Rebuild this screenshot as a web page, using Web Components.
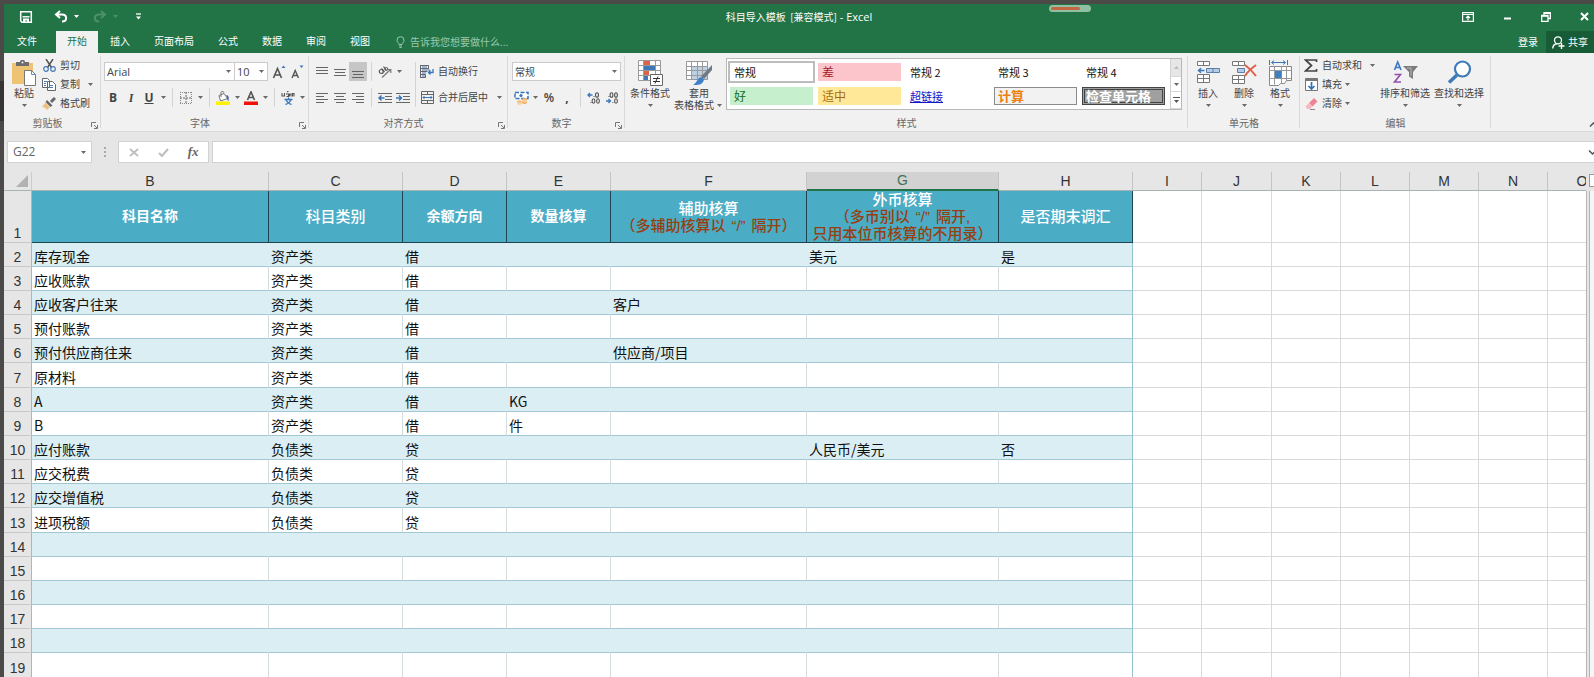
<!DOCTYPE html>
<html lang="zh-CN">
<head>
<meta charset="utf-8">
<title>科目导入模板 [兼容模式] - Excel</title>
<style>
  html, body { height: 100%; margin: 0; }
  body { overflow: hidden; background: #4c4a48; font-family: "Noto Sans CJK SC", "Noto Sans", sans-serif; font-size: 10px; color: #444; }
</style>
</head>
<body>
<xl-app></xl-app>

<script>
const RESET = `
  *, *::before, *::after { box-sizing: border-box; }
  button, input, select { font: inherit; color: inherit; margin: 0; padding: 0; border: 0; background: none; border-radius: 0; outline: 0; }
  button { cursor: default; }
  :host([hidden]) { display: none; }
`;

class XlElement extends HTMLElement {
  constructor() { super(); this.attachShadow({ mode: 'open' }); }
  connectedCallback() {
    if (this.shadowRoot.childNodes.length) return;
    const t = document.createElement('template');
    t.innerHTML = `<style>${RESET}${this.css()}</style>${this.html()}`;
    this.shadowRoot.append(t.content.cloneNode(true));
  }
  css() { return ''; }
  html() { return ''; }
}

/* ---------- icons: [width, height, markup] ---------- */
const line = (y, x1, x2) => `<path d="M${x1} ${y}.5H${x2}" stroke="#666"/>`;
const ICONS = {
  save: [14, 14, `<path d="M1.7 1.7h10.6v10.6H3L1.7 11z" fill="none" stroke="#fff" stroke-width="1.5"/><path d="M3.5 6.8h7" stroke="#fff" stroke-width="1.4"/><path d="M4 8.5h6V13H8v-2.500H6.300V13H4z" fill="#fff"/>`],
  undo: [14, 13, `<path d="M6 1L2 4.500 6 8M2.500 4.500H8c5.500 0 5.500 7 0 7" fill="none" stroke="#fff" stroke-width="2"/>`],
  redo: [14, 13, `<path d="M8 1l4 3.500L8 8M11.500 4.500H6c-5.500 0-5.500 7 0 7" fill="none" stroke="#4d9069" stroke-width="2"/>`],
  customize: [7, 7, `<path d="M1 1h5" stroke="#fff" stroke-width="1.300"/><path d="M1 3.500h5L3.500 6.500z" fill="#fff"/>`],
  caret: [5, 3, `<path d="M0 0h5L2.500 3z" fill="#6a6a6a"/>`],
  caretWhite: [5, 3, `<path d="M0 0h5L2.500 3z" fill="#fff"/>`],
  caretDim: [5, 3, `<path d="M0 0h5L2.500 3z" fill="#4d9069"/>`],
  display: [12, 10, `<path d="M.6.600h10.800v8.800H.6zM.6 2.500h10.800" fill="none" stroke="#fff" stroke-width="1.200"/><path d="M6 8.500v-4M4 6l2-2 2 2" fill="none" stroke="#fff" stroke-width="1.200"/>`],
  minimize: [9, 9, `<path d="M1 6.500h7" stroke="#fff" stroke-width="2"/>`],
  restore: [10, 10, `<path d="M3 3V.7h6.300v5.800H7.500M.7 3.500h6.300v5.800H.7z" fill="none" stroke="#fff" stroke-width="1.300"/><path d="M.7 4h6.300M3 1.200h6.300" stroke="#fff" stroke-width="1.500"/>`],
  close: [9, 9, `<path d="M1 1l7 7M8 1L1 8" stroke="#fff" stroke-width="2"/>`],
  bulb: [9, 12, `<path d="M3 8.500C3 7 1 6.500 1 4.200a3.500 3.500 0 0 1 7 0C8 6.500 6 7 6 8.500zM3 10h3M3.500 11.500h2" fill="none" stroke="#9bc8ad"/>`],
  share: [13, 13, `<circle cx="6" cy="4.300" r="3.500" fill="none" stroke="#fff" stroke-width="1.300"/><path d="M.7 12.500c.2-3 2-4.600 4.300-4.800M9.500 7v6M6.500 10h6" fill="none" stroke="#fff" stroke-width="1.400"/>`],
  paste: [24, 26, `<path d="M0 3h21v21H0z" fill="#eec374"/><path d="M4 2h4c0-3 5-3 5 0h4v4H4z" fill="#6d6d6d"/><circle cx="10.500" cy="2.500" r="1" fill="#eee"/><path d="M12.500 10.500h7l4 4v11h-11z" fill="#fff" stroke="#777"/><path d="M19.500 10.500v4h4" fill="none" stroke="#5a8cc5"/>`],
  cut: [13, 13, `<path d="M3 0l5.500 8.500M10 0L4.500 8.500" stroke="#555" stroke-width="1.500"/><circle cx="3" cy="10" r="2.300" fill="none" stroke="#4a7db8" stroke-width="1.200"/><circle cx="10" cy="10" r="2.300" fill="none" stroke="#4a7db8" stroke-width="1.200"/>`],
  copy: [14, 13, `<path d="M.5.500h5l2 2v7h-7zM5.500 3.500h5l3 3v6h-8z" fill="#fff" stroke="#666"/><path d="M2 3.500h3M2 5.500h2M2 7.500h2M7 7.500h4M7 9.500h4" stroke="#4a7db8"/>`],
  brush: [14, 13, `<path d="M13 1L9 5" stroke="#666" stroke-width="3"/><path d="M5 3l5.500 5.500-2 1.500L3.500 5z" fill="#666"/><path d="M3.500 5.500L8 10l-3 3C4 11 2 10 0 10z" fill="#eec083"/>`],
  fontUp: [14, 14, `<path d="M1.500 13L5.500 3.500 9.500 13M3 10h5" fill="none" stroke="#555" stroke-width="1.600"/><path d="M9.500 3L11.500 .5l2 2.500z" fill="#3b76b8"/>`],
  fontDown: [14, 14, `<path d="M2 13l3.200-7.500L8.500 13M3.200 10.500h4" fill="none" stroke="#555" stroke-width="1.400"/><path d="M9.500.500h4L11.500 3z" fill="#3b76b8"/>`],
  borders: [12, 12, `<path d="M.5 0v12M11.500 0v12M0 .5h12M0 11.500h12" stroke="#888" stroke-dasharray="1 1"/><path d="M6 0v12M0 6h12" stroke="#666" stroke-dasharray="2 1"/>`],
  fill: [14, 14, `<path d="M3 4.500l5-2 3.500 5-7 2.500z" fill="#fff" stroke="#777"/><path d="M5 6V1.500C5 0 8 0 8 2" fill="none" stroke="#777"/><path d="M10 4c3 0 3 3 2.500 6-2-1-1-4-2.500-6z" fill="#3d5fa8"/><path d="M0 10.500h14V14H0z" fill="#fff200"/>`],
  fontColor: [14, 14, `<path d="M3.500 9L7 .8 10.500 9M4.800 6.500h4.500" fill="none" stroke="#555" stroke-width="1.600"/><path d="M0 10.500h14V14H0z" fill="#f0100c"/>`],
  phonetic: [14, 14, `<path d="M1 2v3h2.500V2M5 3h2.500v2.500H5.500M8.500 5.500V3H10v2.500M11.500 5.500V2.500H13v3M6 1l1.500-1" fill="none" stroke="#555" stroke-width="1.100"/><path d="M3.500 8.500h8M7.500 6.500v2M5 9c1 2 3 4 5.500 4.500M10 9c-1 2-3 4-5.500 4.500" fill="none" stroke="#3b76b8" stroke-width="1.300"/>`],
  alTop: [12, 12, line(1,0,12)+line(4,0,12)+line(7,0,12)],
  alMid: [12, 12, line(3,0,12)+line(6,1,11)+line(9,0,12)],
  alBot: [12, 12, line(5,0,12)+line(8,1,11)+line(11,0,12)],
  alLeft: [12, 10, line(0,0,12)+line(3,0,8)+line(6,0,12)+line(9,0,8)],
  alCenter: [12, 10, line(0,0,12)+line(3,2,10)+line(6,0,12)+line(9,2,10)],
  alRight: [12, 10, line(0,0,12)+line(3,4,12)+line(6,0,12)+line(9,4,12)],
  orient: [14, 14, `<circle cx="3.300" cy="6.500" r="2" fill="none" stroke="#555" stroke-width="1.200"/><path d="M3.500 3.500L6.500 7M5.500 1.500l3 4" stroke="#555" stroke-width="1.200"/><circle cx="8.300" cy="4" r="1.500" fill="none" stroke="#555"/><path d="M4 12.500L12 5M12.800 8V4.500H9.500" fill="none" stroke="#777" stroke-width="1.200"/>`],
  outdent: [14, 12, line(1,0,14)+line(4,7,14)+line(7,7,14)+line(10,0,14)+`<path d="M6.500 6H1M3.500 3.500L1 6l2.500 2.500" fill="none" stroke="#3b76b8" stroke-width="1.500"/>`],
  indent: [14, 12, line(1,0,14)+line(4,7,14)+line(7,7,14)+line(10,0,14)+`<path d="M0 6h5.500M3 3.500L5.500 6 3 8.500" fill="none" stroke="#3b76b8" stroke-width="1.500"/>`],
  wrap: [14, 13, `<path d="M.5 0v13M.5.500h8v3h-8M8.500.500v3M.5 6.500h7M.5 9.500h5v3h-5" fill="none" stroke="#666"/><path d="M2 2h5M2 5h8M2 8h4M2 11h3" stroke="#4a7db8"/><path d="M13 4v3.500H9M10.500 5.500l-2 2 2 2" fill="none" stroke="#3b76b8" stroke-width="1.300"/>`],
  merge: [13, 13, `<path d="M.5.500h12v12H.5zM.5 3.500h12M.5 9.500h12M6.500.500v3M6.500 9.500v3" fill="none" stroke="#666"/><path d="M2 6.500h9M3.500 5L2 6.500 3.500 8M9.500 5L11 6.500 9.500 8" fill="none" stroke="#3b76b8"/>`],
  money: [15, 14, `<path d="M1 1.500h13v6H1z" fill="#fff" stroke="#3b76b8" stroke-width="1.500" stroke-dasharray="4 1.500"/><circle cx="7" cy="4.500" r="1.600" fill="#3b76b8"/><path d="M8 8.500c0-2 5-2 5 0v3c0 2-5 2-5 0zM3 11c0-2 5-2 5 0v1c0 2-5 2-5 0z" fill="#f4b56e"/><path d="M8 10h5M3 12h5" stroke="#fff" stroke-width=".7"/>`],
  decInc: [14, 12, `<path d="M5.500 3H1M3 1L1 3l2 2" fill="none" stroke="#3b76b8" stroke-width="1.300"/><g fill="none" stroke="#555" stroke-width="1.100"><ellipse cx="10" cy="3" rx="1.500" ry="2.300"/><ellipse cx="6.500" cy="9" rx="1.400" ry="2.200"/><ellipse cx="11" cy="9" rx="1.400" ry="2.200"/></g><path d="M3.500 10.500h1M6.500 4.500h1" stroke="#555"/>`],
  decDec: [14, 12, `<path d="M1 9h4.500M3.500 7l2 2-2 2" fill="none" stroke="#3b76b8" stroke-width="1.300"/><g fill="none" stroke="#555" stroke-width="1.100"><ellipse cx="6.500" cy="3" rx="1.400" ry="2.300"/><ellipse cx="11" cy="3" rx="1.400" ry="2.300"/><ellipse cx="11" cy="9" rx="1.400" ry="2.200"/></g><path d="M3.500 4.500h1M7.500 10.500h1" stroke="#555"/>`],
  launcher: [7, 7, `<path d="M.5 5V.5H5M3 3l3 3M6.500 3v3.500H3" fill="none" stroke="#777"/>`],
  cond: [26, 26, `<path d="M1.500.500h22v20h-22z" fill="#fff"/><path d="M7 1h6v5H7zM7 11h5v5H7z" fill="#d9644a"/><path d="M7 6h11v5H7zM7 16h4v5H7z" fill="#3f78b5"/><path d="M1.500.500h22v20h-22zM1.500 5.500h22M1.500 10.500h22M1.500 15.500h22M6.500.500v20M18.500.500v20" fill="none" stroke="#999"/><path d="M13.500 14.500h12v11h-12z" fill="#fff" stroke="#666"/><path d="M16 18.500h7M16 21.500h7M21 16.500l-3 7" stroke="#333"/>`],
  fmtTable: [26, 26, `<path d="M.5 1.500h21v18H.5z" fill="#fff"/><path d="M6 6h16v14H6z" fill="#bcd0e6"/><path d="M.5 1.500h21v18H.5zM.5 6.500h21M.5 10.500h21M.5 15.500h21M5.500 1.500v18M11.500 1.500v18M16.500 1.500v18" fill="none" stroke="#999"/><path d="M26 5v5l-8 9-3-2.500z" fill="#707a84"/><path d="M15 17l3 2.500c-1 5-6 6-11 5.500 4-2 4-7 8-8z" fill="#3f80c8"/>`],
  insert: [23, 24, `<path d="M.5 1.500h12v4H.5zM6.500 1.500v4M.5 14.500h12v8H.5zM6.500 14.500v8M.5 18.500h12" fill="#fff" stroke="#777"/><path d="M9.500 8.500h13v4h-13zM16 8.500v4" fill="#b4cce6" stroke="#5a7fa8"/><path d="M7.500 10.500H2M4 8.200L1.500 10.500 4 12.800" fill="none" stroke="#3b76b8" stroke-width="1.500"/>`],
  remove: [25, 24, `<path d="M.5 1.500h12v4H.5zM6.500 1.500v4M.5 15.500h12v8H.5zM6.500 15.500v8M.5 19.500h12" fill="#fff" stroke="#777"/><path d="M5.500 8.500h7v4h-7z" fill="#b4cce6" stroke="#5a7fa8"/><path d="M13 5c4 3 8 7 11 11M24 5c-4 3-9 7-11 11" fill="none" stroke="#de6048" stroke-width="2"/>`],
  format: [25, 26, `<path d="M1.500 0v5M19.500 0v5" stroke="#3b76b8"/><path d="M4 2.500h13M6 .5l-2.500 2L6 4.500M15 .5l2.500 2-2.500 2" fill="none" stroke="#3b76b8"/><path d="M1.500 6.500h22v14h-5l-2 3h-4l-2 2h-9z" fill="#fff" stroke="#888"/><path d="M1.500 10.500h22M1.500 18.500h22M6.500 6.500v18M13.500 6.500v17M18.500 6.500v14" stroke="#999"/><path d="M7 11h6.500v7H7z" fill="#3f80c0"/>`],
  sigma: [14, 13, `<path d="M12.500 3V1H1.500l6 5.500-6 5.500h11v-2" fill="none" stroke="#444" stroke-width="1.700"/>`],
  down: [13, 13, `<path d="M.5.500h12v12H.5z" fill="#fff" stroke="#777"/><path d="M1 2h11" stroke="#777" stroke-width="2"/><path d="M6.500 4v6.500M3.500 8l3 3 3-3" fill="none" stroke="#2f72b8" stroke-width="1.700"/>`],
  eraser: [13, 12, `<path d="M4 5L9 0l3.500 3.500-5 5z" fill="#ef8394"/><path d="M4 5l3.500 3.500L5 11H2L.5 8.500z" fill="#f6b8c2"/><path d="M5 11.500h5" stroke="#888"/>`],
  sort: [25, 25, `<path d="M1.500 10L4.700 2 8 10M2.700 7.500h4" fill="none" stroke="#3f78c0" stroke-width="1.600"/><path d="M1.500 14.500h6L1.500 22h6.500" fill="none" stroke="#9150ad" stroke-width="1.600"/><path d="M10 6h15l-5 6v7l-4-2.500V12z" fill="#7b7b7b"/><path d="M14 8h4v8" fill="none" stroke="#bbb"/>`],
  find: [25, 25, `<circle cx="15.500" cy="9" r="7.500" fill="#fff" stroke="#3d7ab8" stroke-width="2.200"/><path d="M10 15l-8 7.500" stroke="#3d7ab8" stroke-width="3.500"/>`],
  up: [9, 5, `<path d="M1 4.500l3.500-3.500L8 4.500" fill="none" stroke="#555" stroke-width="1.500"/>`],
  chevron: [9, 5, `<path d="M1 .5L4.500 4 8 .5" fill="none" stroke="#555" stroke-width="1.500"/>`],
  upSmall: [5, 3, `<path d="M0 3h5L2.500 0z" fill="#bbb"/>`],
  more: [7, 7, `<path d="M0 .5h7" stroke="#555"/><path d="M1 3h5L3.500 6z" fill="#555"/>`],
  cancel: [10, 9, `<path d="M1 1l8 7M9 1L1 8" stroke="#bdbdbd" stroke-width="1.700"/>`],
  check: [11, 9, `<path d="M1 5l3 3 6-7" fill="none" stroke="#bdbdbd" stroke-width="2"/>`]
};
class XlIcon extends XlElement {
  css() { return `:host { display: block; flex: none; } svg { display: block; }`; }
  html() {
    const [w, h, m] = ICONS[this.getAttribute('name')];
    return `<svg width="${w}" height="${h}" viewBox="0 0 ${w} ${h}" aria-hidden="true">${m}</svg>`;
  }
}

/* ---------- a ribbon command: icon or glyph, label, optional caret ---------- */
class ToolButton extends XlElement {
  css() { return `
    :host { display: block; }
    button { display: flex; align-items: center; width: 100%; height: 19px; line-height: 14px; white-space: nowrap; }
    .pic { width: 18px; display: flex; justify-content: center; }
    .txt { margin-left: 2px; padding-bottom: 2px; }
    .caret { width: 10px; display: flex; justify-content: center; }
    :host([wide]) .caret { margin-left: 5px; }
    :host([push]) .caret { margin-left: auto; }
    :host([pressed]) button { background: #c6c6c6; }
    :host([big]) button { height: auto; flex-direction: column; padding-top: 7px; line-height: 12px; }
    :host([big]) .pic { width: auto; height: 24px; margin-bottom: 3px; }
    :host([big]) .txt { margin: 0; padding: 0; }
    :host([big]) .caret { height: 12px; align-items: center; }
    .second { display: flex; }`; }
  html() {
    const a = n => this.getAttribute(n);
    const pic = a('icon') ? `<xl-icon name="${a('icon')}"></xl-icon>` : `<slot name="glyph"></slot>`;
    const txt = a('label') ? `<span class="txt">${a('label')}</span>` : '';
    const caret = this.hasAttribute('caret') ? `<span class="caret"><xl-icon name="caret"></xl-icon></span>` : '';
    const second = a('second') ? `<span class="second"><span>${a('second')}</span>${caret}</span>` : caret;
    return `<button type="button" aria-label="${a('label') || a('tip') || ''}"><span class="pic">${pic}</span>${txt}${second}</button>`;
  }
}

class RibbonGroup extends XlElement {
  css() { return `
    :host { display: flex; flex-direction: column; flex: none; height: 78px; position: relative; }
    :host::after { content: ""; width: 1px; background: #d8d8d8; position: absolute; right: 0; top: 3px; bottom: 3px; }
    .body { height: 63px; }
    footer { display: flex; height: 15px; line-height: 13px; color: #666; }
    .name { flex: 1; text-align: center; }
    button { width: 10px; padding-top: 4px; }`; }
  html() {
    const n = this.getAttribute('name');
    return `<div class="body"><slot></slot></div><footer><span class="name">${n}</span>${
      this.hasAttribute('launcher') ? `<button type="button" aria-label="${n}设置"><xl-icon name="launcher"></xl-icon></button>` : ''}</footer>`;
  }
}

class DropField extends XlElement {
  css() { return `
    :host { display: block; position: relative; height: 19px; color: #444; font-family: "Open Sans", "Noto Sans CJK SC", sans-serif; font-size: 11px; }
    :host([cjk]) { font-size: 10px; }
    select { appearance: none; width: 100%; height: 100%; padding: 0 2px; background: #fff; border: 1px solid #cbcbcb; line-height: 14px; }
    xl-icon { position: absolute; right: 4px; top: 8px; pointer-events: none; }`; }
  html() { return `<select aria-label="${this.getAttribute('tip')}"><option>${this.getAttribute('value')}</option></select><xl-icon name="caret"></xl-icon>`; }
}

/* ---------- title bar ---------- */
class TitleBar extends XlElement {
  css() { return `
    :host { display: grid; grid-template-columns: 1fr auto 1fr; align-items: center; height: 27px; padding-bottom: 2px; background: #227447; color: #fff; line-height: 14px; position: relative; }
    .qat { display: flex; align-items: center; padding-left: 15px; }
    .qat button { display: flex; align-items: center; gap: 6px; margin-right: 14px; }
    .qat button:first-child { margin-right: 21px; }
    .qat button:nth-child(3) { margin-right: 17px; }
    .win { display: flex; justify-content: flex-end; align-items: center; gap: 29px; padding-right: 5px; }
    h1 { margin: 0; font-size: 10px; font-weight: 400; white-space: pre; }
    h1 span { font-family: "Open Sans", sans-serif; font-size: 11px; }
    .pill { position: absolute; left: 66%; top: 1px; width: 42px; height: 7px; margin-left: -4px; border-radius: 4px; background: #8fc0a3; padding: 2px 11px 2px 2px; }
    .pill i { display: block; height: 3px; border-radius: 2px; background: #c4663f; }`; }
  html() { return `
    <div class="qat">
      <button type="button" aria-label="保存"><xl-icon name="save"></xl-icon></button>
      <button type="button" aria-label="撤消"><xl-icon name="undo"></xl-icon><xl-icon name="caretWhite"></xl-icon></button>
      <button type="button" aria-label="恢复"><xl-icon name="redo"></xl-icon><xl-icon name="caretDim"></xl-icon></button>
      <button type="button" aria-label="自定义快速访问工具栏"><xl-icon name="customize"></xl-icon></button>
    </div>
    <h1>科目导入模板  [兼容模式]<span> - Excel</span></h1>
    <div class="win">
      <button type="button" aria-label="功能区显示选项"><xl-icon name="display"></xl-icon></button>
      <button type="button" aria-label="最小化"><xl-icon name="minimize"></xl-icon></button>
      <button type="button" aria-label="向下还原"><xl-icon name="restore"></xl-icon></button>
      <button type="button" aria-label="关闭"><xl-icon name="close"></xl-icon></button>
    </div>
    <div class="pill"><i></i></div>`; }
}

/* ---------- ribbon tabs ---------- */
class TabBar extends XlElement {
  css() { return `
    :host { display: flex; height: 22px; background: #227447; color: #fff; line-height: 18px; white-space: nowrap; }
    nav { display: flex; }
    nav button { padding: 0 12px 2px; }
    nav button:first-child { padding: 0 19px 2px 13px; }
    nav button[aria-selected=true] { background: #f1f1f1; color: #227447; padding: 0 11px 2px; }
    label { display: flex; align-items: center; gap: 5px; margin-left: 14px; flex: 1; }
    input { width: 160px; color: #9bc8ad; }
    input::placeholder { color: #9bc8ad; opacity: 1; }
    .share { display: flex; align-items: center; gap: 3px; margin-left: 8px; padding: 0 6px; background: #185c37; }`; }
  html() { return `
    <nav role="tablist">${['文件','开始','插入','页面布局','公式','数据','审阅','视图'].map((t, i) =>
      `<button type="button" role="tab" aria-selected="${i === 1}">${t}</button>`).join('')}</nav>
    <label><xl-icon name="bulb"></xl-icon><input type="text" aria-label="操作说明搜索" placeholder="告诉我您想要做什么..."></label>
    <button type="button">登录</button>
    <button type="button" class="share"><xl-icon name="share"></xl-icon>共享</button>`; }
}

/* ---------- cell style gallery ---------- */
class StyleGallery extends XlElement {
  css() { return `
    :host { display: flex; width: 456px; height: 52px; background: #fff; border: 1px solid #b8b8b8; color: #111; }
    .items { flex: 1; display: grid; grid-template-columns: repeat(5, 83px); grid-template-rows: 18px 18px; column-gap: 5px; row-gap: 6px; padding: 4px 0 0 3px; }
    .items button { text-align: left; padding: 0 4px; font-size: 11px; line-height: 16px; white-space: nowrap; }
    .items .sel { outline: 2px solid #bdbdbd; }
    .items .lg { font-size: 12px; }
    .bad { background: #fcc5cb; color: #a2142a; }
    .good { background: #c6efce; color: #146c1c; }
    .mid { background: #ffe999; color: #a8690c; }
    .link { color: #1414c8; text-decoration: underline; }
    .items .calc { background: #f2f2f2; border: 1px solid #8c8c8c; color: #ec8010; font-weight: 700; font-size: 13px; padding: 0 3px; line-height: 14px; }
    .items .chk { background: #a0a0a0; border: 3px double #444; color: #fff; font-weight: 700; font-size: 13px; padding: 0 1px; line-height: 10px; }
    .roll { width: 11px; display: grid; grid-template-rows: 18px 15px 17px; border-left: 1px solid #d0d0d0; }
    .roll button { display: grid; place-items: center; border-bottom: 1px solid #d8d8d8; }
    .roll button:first-child { background: #e6e6e6; }`; }
  html() { return `
    <div class="items">
      <button type="button" class="sel">常规</button><button type="button" class="bad lg">差</button><button type="button">常规 2</button><button type="button">常规 3</button><button type="button">常规 4</button>
      <button type="button" class="good lg">好</button><button type="button" class="mid lg">适中</button><button type="button" class="link">超链接</button><button type="button" class="calc">计算</button><button type="button" class="chk">检查单元格</button>
    </div>
    <div class="roll">
      <button type="button" aria-label="上一行"><xl-icon name="upSmall"></xl-icon></button>
      <button type="button" aria-label="下一行"><xl-icon name="caret"></xl-icon></button>
      <button type="button" aria-label="其他"><xl-icon name="more"></xl-icon></button>
    </div>`; }
}

/* ---------- ribbon ---------- */
class XlRibbon extends XlElement {
  css() { return `
    :host { display: flex; height: 78px; background: #f1f1f1; box-shadow: 0 1px 0 #dadada; position: relative; }
    .clip { width: 97px; } .font { width: 208px; } .align { width: 199px; } .num { width: 117px; }
    .styles { width: 563px; } .cells { width: 112px; } .edit { width: 191px; }
    .row { display: flex; height: 19px; align-items: center; }
    .rows { display: grid; row-gap: 7px; padding-top: 9px; }
    .list { padding-top: 3px; }
    .cols { display: flex; }
    .sep { width: 1px; height: 19px; margin: 0 4px; background: #d4d4d4; }
    .vsep { width: 1px; height: 45px; background: #d4d4d4; margin: 9px 2px 0 0; }
    .clip .cols { padding-left: 6px; gap: 2px; }
    .clip .paste { width: 28px; }
    .font .rows { padding-left: 3px; }
    .name { width: 131px; } .size { width: 34px; margin: 0 2px 0 -1px; }
    .align .cols { padding-left: 4px; }
    .align .cols > .rows:first-child { width: 102px; }
    .align .cols > .rows:last-child { width: 86px; }
    .num .rows { padding-left: 4px; } .num drop-field { width: 109px; }
    .styles .cols { padding-left: 3px; }
    .cond { width: 44px; } .ftab { width: 54px; } style-gallery { margin-top: 5px; }
    .cells .cols { padding-left: 2px; } .cells tool-button { width: 36px; }
    .edit .cols { padding-left: 2px; } .edit .list { width: 76px; } .edit .b { width: 54px; }
    .g { font: 700 12px/14px "Open Sans", sans-serif; color: #444; }
    .i { font: italic 700 12px/14px "Liberation Serif", serif; }
    .u { text-decoration: underline; }
    .p { font: 600 12px/14px "Open Sans", sans-serif; }
    .fold { position: absolute; right: -4px; bottom: 4px; }`; }
  html() { return `
    <ribbon-group class="clip" name="剪贴板" launcher><div class="cols">
      <tool-button class="paste" big icon="paste" label="粘贴" caret></tool-button>
      <div class="list"><tool-button icon="cut" label="剪切"></tool-button><tool-button icon="copy" label="复制" caret wide></tool-button><tool-button icon="brush" label="格式刷"></tool-button></div>
    </div></ribbon-group>
    <ribbon-group class="font" name="字体" launcher><div class="rows">
      <div class="row"><drop-field class="name" tip="字体" value="Arial"></drop-field><drop-field class="size" tip="字号" value="10"></drop-field><tool-button icon="fontUp" tip="增大字号"></tool-button><tool-button icon="fontDown" tip="减小字号"></tool-button></div>
      <div class="row"><tool-button tip="加粗"><span slot="glyph" class="g">B</span></tool-button><tool-button tip="倾斜"><span slot="glyph" class="i">I</span></tool-button><tool-button tip="下划线" caret><span slot="glyph" class="g u">U</span></tool-button><i class="sep"></i><tool-button icon="borders" tip="边框" caret></tool-button><i class="sep"></i><tool-button icon="fill" tip="填充颜色" caret></tool-button><tool-button icon="fontColor" tip="字体颜色" caret></tool-button><i class="sep"></i><tool-button icon="phonetic" tip="拼音" caret></tool-button></div>
    </div></ribbon-group>
    <ribbon-group class="align" name="对齐方式" launcher><div class="cols">
      <div class="rows">
        <div class="row"><tool-button icon="alTop" tip="顶端对齐"></tool-button><tool-button icon="alMid" tip="垂直居中"></tool-button><tool-button icon="alBot" tip="底端对齐" pressed></tool-button><i class="sep"></i><tool-button icon="orient" tip="方向" caret></tool-button></div>
        <div class="row"><tool-button icon="alLeft" tip="左对齐"></tool-button><tool-button icon="alCenter" tip="居中"></tool-button><tool-button icon="alRight" tip="右对齐"></tool-button><i class="sep"></i><tool-button icon="outdent" tip="减少缩进量"></tool-button><tool-button icon="indent" tip="增加缩进量"></tool-button></div>
      </div><i class="vsep"></i>
      <div class="rows"><tool-button icon="wrap" label="自动换行"></tool-button><tool-button icon="merge" label="合并后居中" caret push></tool-button></div>
    </div></ribbon-group>
    <ribbon-group class="num" name="数字" launcher><div class="rows">
      <drop-field cjk tip="数字格式" value="常规"></drop-field>
      <div class="row"><tool-button icon="money" tip="会计数字格式" caret></tool-button><tool-button tip="百分比样式"><span slot="glyph" class="p">%</span></tool-button><tool-button tip="千位分隔样式"><span slot="glyph" class="g">,</span></tool-button><i class="sep"></i><tool-button icon="decInc" tip="增加小数位数"></tool-button><tool-button icon="decDec" tip="减少小数位数"></tool-button></div>
    </div></ribbon-group>
    <ribbon-group class="styles" name="样式"><div class="cols">
      <tool-button class="cond" big icon="cond" label="条件格式" caret></tool-button>
      <tool-button class="ftab" big icon="fmtTable" label="套用" second="表格格式" caret></tool-button>
      <style-gallery></style-gallery>
    </div></ribbon-group>
    <ribbon-group class="cells" name="单元格"><div class="cols">
      <tool-button big icon="insert" label="插入" caret></tool-button><tool-button big icon="remove" label="删除" caret></tool-button><tool-button big icon="format" label="格式" caret></tool-button>
    </div></ribbon-group>
    <ribbon-group class="edit" name="编辑"><div class="cols">
      <div class="list"><tool-button icon="sigma" label="自动求和" caret wide></tool-button><tool-button icon="down" label="填充" caret></tool-button><tool-button icon="eraser" label="清除" caret></tool-button></div>
      <tool-button class="b" big icon="sort" label="排序和筛选" caret></tool-button><tool-button class="b" big icon="find" label="查找和选择" caret></tool-button>
    </div></ribbon-group>
    <button type="button" class="fold" aria-label="折叠功能区"><xl-icon name="up"></xl-icon></button>`; }
}

/* ---------- name box and formula bar ---------- */
class FormulaBar extends XlElement {
  css() { return `
    :host { display: flex; padding: 10px 0 9px 3px; background: #e6e6e6; }
    .box { display: flex; align-items: center; height: 22px; background: #fff; border: 1px solid #d2d2d2; }
    .ref { width: 85px; }
    .ref input { flex: 1; min-width: 0; padding-left: 5px; font: 12px/16px "Open Sans", sans-serif; color: #666; }
    .ref button { width: 16px; display: grid; place-items: center; }
    .dots { width: 26px; display: grid; place-content: center; gap: 2px; }
    .dots i { width: 2px; height: 2px; background: #aaa; }
    .ops { width: 91px; justify-content: space-around; }
    .ops button { width: 30px; display: grid; place-items: center; }
    .fx { font: italic 700 13px/16px "Liberation Serif", serif; color: #666; }
    .edit { flex: 1; margin-left: 3px; border-right: 0; }
    .edit input { flex: 1; min-width: 0; height: 20px; padding: 0 4px; font-size: 12px; }
    .edit button { width: 6px; overflow: hidden; }`; }
  html() { return `
    <div class="box ref"><input type="text" aria-label="名称框" value="G22"><button type="button" aria-label="名称列表"><xl-icon name="caret"></xl-icon></button></div>
    <div class="dots"><i></i><i></i><i></i></div>
    <div class="box ops"><button type="button" aria-label="取消"><xl-icon name="cancel"></xl-icon></button><button type="button" aria-label="输入"><xl-icon name="check"></xl-icon></button><button type="button" class="fx">fx</button></div>
    <div class="box edit"><input type="text" aria-label="编辑栏"><button type="button" aria-label="展开编辑栏"><xl-icon name="chevron"></xl-icon></button></div>`; }
}

/* ---------- worksheet ---------- */
const COLS = [['B',237],['C',134],['D',104],['E',104],['F',196],['G',192],['H',134],['I',69],['J',70],['K',69],['L',69],['M',69],['N',69],['O',69]];
const DATA = {
  2: ['库存现金','资产类','借','','','美元','是'],
  3: ['应收账款','资产类','借'],
  4: ['应收客户往来','资产类','借','','客户'],
  5: ['预付账款','资产类','借'],
  6: ['预付供应商往来','资产类','借','','供应商/项目'],
  7: ['原材料','资产类','借'],
  8: ['A','资产类','借','KG'],
  9: ['B','资产类','借','件'],
  10: ['应付账款','负债类','贷','','','人民币/美元','否'],
  11: ['应交税费','负债类','贷'],
  12: ['应交增值税','负债类','贷'],
  13: ['进项税额','负债类','贷']
};
const SLASH = '<span class="q">“/”</span>';
const TITLES = ['科目名称','科目类别','余额方向','数量核算',`辅助核算<br><em>（多辅助核算以${SLASH}隔开）</em>`,`外币核算<br><em>（多币别以${SLASH}隔开,<br>只用本位币核算的不用录）</em>`,'是否期末调汇'];
class SheetGrid extends XlElement {
  css() { return `
    :host { display: block; overflow: hidden; background: #fff; color: #111; font-size: 14px; }
    table { table-layout: fixed; width: ${28 + COLS.reduce((s, c) => s + c[1], 0)}px; border-collapse: separate; border-spacing: 0; line-height: 18px; }
    th, td { padding: 0; overflow: hidden; white-space: nowrap; text-align: left; vertical-align: bottom; font-weight: 400; border: solid #d9d9d9; border-width: 0 1px 1px 0; }
    thead th { height: 19px; text-align: center; background: #e6e6e6; color: #333; font-family: "Liberation Sans", Arial, sans-serif; border-color: #c4c4c4; border-bottom-color: #a8b4b4; }
    thead .active { background: #d2d2d2; color: #3f7358; border-bottom: 2px solid #227447; line-height: 17px; }
    thead .corner { border-right-color: #ccc; }
    .corner svg { display: block; margin: 0 3px 3px auto; }
    tbody tr { height: 24px; }
    tbody tr:nth-child(6n+1) { height: 25px; }
    tbody tr:first-child { height: 52px; }
    tbody th { text-align: center; background: #e6e6e6; color: #333; font-family: "Liberation Sans", Arial, sans-serif; border-color: #c8c8c8; border-right-color: #b4b4b4; }
    .in { padding: 0 0 1px 2px; border-color: #d5dcde; border-bottom-color: #a0c8d3; }
    .last { border-right-color: #93c2d0; }
    tr:nth-child(even) .in { background: #daeef3; border-right-color: #daeef3; }
    tr:nth-child(even) .last { border-right-color: #93c2d0; }
    tr .title { padding: 0; background: #4bacc6; color: #fff; font-family: "Liberation Sans", "Noto Sans CJK SC", sans-serif; font-weight: 700; text-align: center; vertical-align: middle; line-height: 17px; border-color: #1d4450; }
    tr .wide { font-size: 15px; font-weight: 500; }
    em { font-style: normal; color: #97400f; }
    .q { padding: 0 6px; }`; }
  html() {
    const cols = COLS.map(c => `<col style="width:${c[1]}px">`).join('');
    const head = COLS.map(c => `<th scope="col" class="${c[0] === 'G' ? 'active' : ''}">${c[0]}</th>`).join('');
    let rows = '';
    for (let r = 1; r <= 19; r++) {
      rows += `<tr><th scope="row">${r}</th>` + COLS.map((c, i) => {
        const cls = i > 6 ? '' : 'in' + (i === 6 ? ' last' : '') + (r === 1 ? ' title' : '') + (r === 1 && [1, 4, 5, 6].includes(i) ? ' wide' : '');
        const text = r === 1 ? TITLES[i] : (DATA[r] || [])[i];
        return `<td class="${cls}">${text || ''}</td>`;
      }).join('') + '</tr>';
    }
    return `<table><colgroup><col style="width:28px">${cols}</colgroup>
      <thead><tr><th class="corner"><svg width="12" height="12" viewBox="0 0 12 12" aria-hidden="true"><path d="M12 0v12H0z" fill="#b2b2b2"/></svg></th>${head}</tr></thead><tbody>${rows}</tbody></table>`;
  }
}

class ScrollEdge extends XlElement {
  css() { return `
    :host { display: flex; flex-direction: column; width: 8px; background: #e6e6e6; }
    button { align-self: flex-end; width: 5px; height: 13px; margin: 2px 0 4px; background: #fff; border: 1px solid #999; border-right: 0; }
    div { flex: 1; border: solid #b4b4b4; border-width: 0 0 0 1px; display: flex; justify-content: flex-end; }
    i { width: 5px; background: #f6f6f6; border-left: 1px solid #b4b4b4; }`; }
  html() { return `<button type="button" aria-label="向上滚动"></button><div><i></i></div>`; }
}

class XlApp extends XlElement {
  css() { return `
    :host { display: flex; flex-direction: column; height: 100vh; padding: 4px 0 0 4px; background: linear-gradient(#4c4a48 81px, #363534 81px, #363534 121px, #4c4a48 121px); overflow: hidden; }
    xl-ribbon { z-index: 1; }
    .work { flex: 1; min-height: 0; display: flex; }
    sheet-grid { flex: 1; min-width: 0; }
    scroll-edge { flex: none; }`; }
  html() { return `<title-bar></title-bar><tab-bar></tab-bar><xl-ribbon></xl-ribbon><formula-bar></formula-bar>
    <div class="work"><sheet-grid></sheet-grid><scroll-edge></scroll-edge></div>`; }
}

Object.entries({
  'xl-icon': XlIcon, 'tool-button': ToolButton, 'ribbon-group': RibbonGroup, 'drop-field': DropField,
  'title-bar': TitleBar, 'tab-bar': TabBar, 'style-gallery': StyleGallery, 'xl-ribbon': XlRibbon,
  'formula-bar': FormulaBar, 'sheet-grid': SheetGrid, 'scroll-edge': ScrollEdge, 'xl-app': XlApp
}).forEach(([n, c]) => customElements.define(n, c));
</script>
</body>
</html>
